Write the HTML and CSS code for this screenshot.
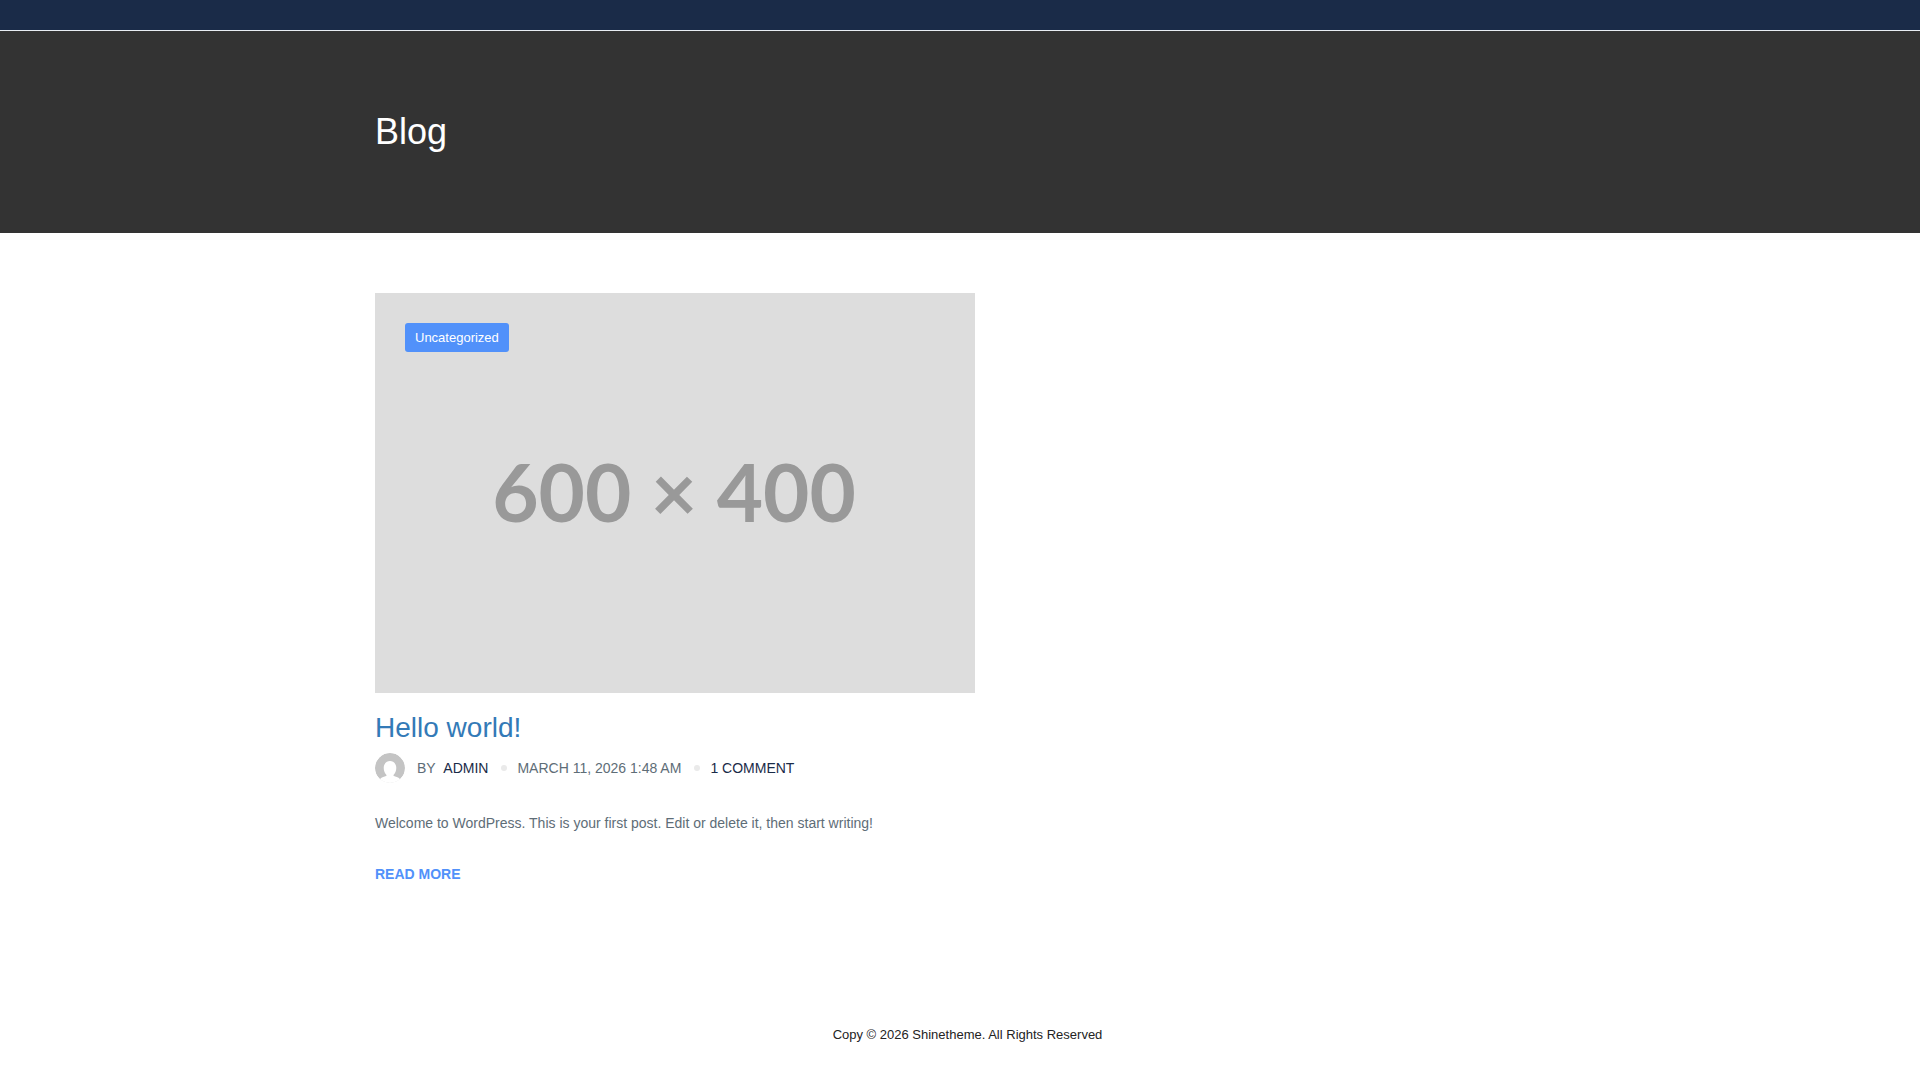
FILE: index.html
```html
<!DOCTYPE html>
<html lang="en">
<head>
  <meta charset="UTF-8">
  <meta name="viewport" content="width=device-width, initial-scale=1.0">
  <title>Blog</title>
  <link rel="stylesheet" href="styles.css">
</head>
<body>
  <header class="topbar"></header>

  <div class="banner">
    <div class="container">
      <h1>Blog</h1>
    </div>
  </div>

  <main class="container content">
    <article class="post">
      <div class="thumb">
        <svg viewBox="0 0 600 400" role="img" aria-label="600 × 400">
          <rect width="600" height="400" fill="#ddd"/>
          <text class="thumb-text" x="299" y="229" text-anchor="middle">600 × 400</text>
        </svg>
        <a class="category" href="#">Uncategorized</a>
      </div>

      <h2 class="post-title"><a href="#">Hello world!</a></h2>

      <div class="meta">
        <!-- default avatar -->
        <svg class="avatar" viewBox="0 0 30 30" aria-hidden="true">
          <circle cx="15" cy="15" r="15" fill="#c4c4c4"/>
          <path d="M15 8c-3.600 0-6.300 2.900-6.300 6.800 0 3.200 1.200 5.800 3 7.400-.4 1.100-3 1.300-5.200 2.500C5.600 25.200 5 26 4.500 27v3h21v-3c-.5-1-1.100-1.800-2-2.300-2.200-1.200-4.800-1.400-5.200-2.500 1.800-1.600 3-4.200 3-7.400C21.300 10.900 18.600 8 15 8z" fill="#fff"/>
        </svg>
        <span class="author">by <a href="#">admin</a></span>
        <span class="dot"></span>
        <span>March 11, 2026 1:48 am</span>
        <span class="dot"></span>
        <a href="#">1 Comment</a>
      </div>

      <p class="excerpt">Welcome to WordPress. This is your first post. Edit or delete it, then start writing!</p>
      <a class="read-more" href="#">Read more</a>
    </article>
  </main>

  <footer class="footer">Copy © 2026 Shinetheme. All Rights Reserved</footer>
</body>
</html>
```

FILE: styles.css
```css
* {
  box-sizing: border-box;
}

body {
  margin: 0;
  font-family: "Liberation Sans", Arial, sans-serif;
  font-size: 14px;
  line-height: 20px;
  color: #5e6d77;
  background: #fff;
}

a {
  color: #1a2b48;
  text-decoration: none;
}

.container {
  width: 100%;
  max-width: 1170px;
  margin: 0 auto;
}

.topbar {
  height: 31px;
  background: #1a2b48;
  border-bottom: 1px solid #e9eef4;
}

.banner {
  padding: 81px 0;
  background: #333;
}

.banner h1 {
  margin: 0;
  font-size: 36px;
  font-weight: 400;
  line-height: 40px;
  color: #fff;
}

.content {
  padding: 60px 0;
}

.post {
  max-width: 600px;
  margin-bottom: 60px;
}

.thumb {
  position: relative;
}

.thumb svg {
  display: block;
  width: 100%;
}

.thumb-text {
  font-family: Lato, sans-serif;
  font-size: 80px;
  font-weight: 700;
  fill: #999;
}

.category {
  position: absolute;
  top: 30px;
  left: 30px;
  padding: 5px 10px;
  font-size: 13px;
  line-height: 19px;
  color: #fff;
  background: #5191fa;
  border-radius: 3px;
}

.post-title {
  margin: 19px 0 9px;
  font-size: 28px;
  font-weight: 400;
  line-height: 32px;
}

.post-title a {
  color: #337ab7;
}

.meta {
  display: flex;
  align-items: center;
  text-transform: uppercase;
}

.avatar {
  width: 30px;
  height: 30px;
  margin-right: 12px;
  border-radius: 50%;
}

.author a {
  margin-left: 4px;
}

.dot {
  width: 6px;
  height: 6px;
  margin: 0 10px 0 13px;
  border-radius: 50%;
  background: #eaeaea;
}

.excerpt {
  margin: 30px 0 31px;
}

.read-more {
  font-weight: 700;
  text-transform: uppercase;
  color: #5191fa;
}

.footer {
  padding: 21px 0 35px 15px;
  font-size: 13px;
  text-align: center;
  color: #232323;
}
```
